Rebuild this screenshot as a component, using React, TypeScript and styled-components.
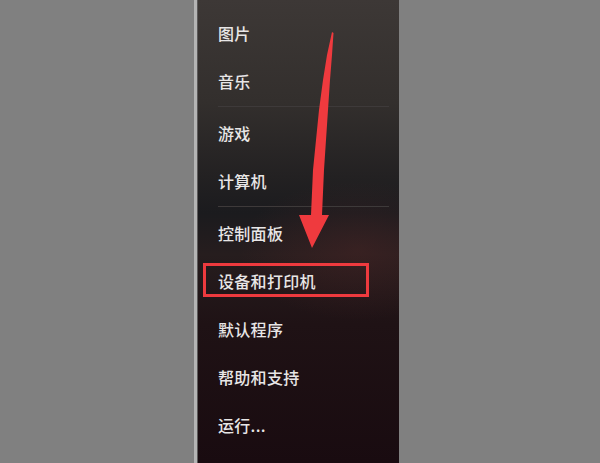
import React from 'react'
import styled, { createGlobalStyle } from 'styled-components'

const GlobalStyle = createGlobalStyle`
  html, body {
    margin: 0;
    padding: 0;
    background: #808080;
  }
  #root {
    height: 463px;
  }
`

const Page = styled.div`
  position: relative;
  display: flex;
  width: 600px;
  height: 463px;
  padding-left: 194px;
  box-sizing: border-box;
  overflow: hidden;
  background: #808080;
`

const Panel = styled.div`
  width: 205px;
  height: 100%;
  box-sizing: border-box;
  border-left: 3px solid #b4b4b4;
  box-shadow: inset 1px 0 0 #5c5a5a;
  background:
    radial-gradient(ellipse 120px 70px at 80% 54%, rgba(90, 40, 40, 0.35), transparent),
    linear-gradient(
      180deg,
      #3d3836 0%,
      #332f2d 22%,
      #232122 38%,
      #1b1b1e 46%,
      #261d1e 55%,
      #1f1215 70%,
      #190b10 100%
    );
`

const Menu = styled.ul`
  list-style: none;
  margin: 0;
  padding: 9px 10px 0 21px;
  display: flex;
  flex-direction: column;
`

const Item = styled.li<{ $marked?: boolean }>`
  position: relative;
  height: 48px;
  display: flex;
  align-items: center;
  font-family: "Noto Sans CJK SC", "Noto Sans", sans-serif;
  font-size: 16px;
  font-weight: 500;
  color: #e8e6e6;
  letter-spacing: 0.3px;

  ${(p) =>
    p.$marked &&
    `
    &::after {
      content: '';
      position: absolute;
      left: -15px;
      top: 6px;
      width: 166px;
      height: 34px;
      box-sizing: border-box;
      border: 3px solid #ee3a3e;
    }
  `}
`

const Separator = styled.li`
  height: 1px;
  margin: 1px 0 2px;
  background: #3e3a3a;
`

const ArrowLayer = styled.svg`
  position: absolute;
  left: 0;
  top: 0;
  pointer-events: none;
`

type Entry = { label: string; marked?: boolean } | 'sep'

const entries: Entry[] = [
  { label: '图片' },
  { label: '音乐' },
  'sep',
  { label: '游戏' },
  { label: '计算机' },
  'sep',
  { label: '控制面板' },
  { label: '设备和打印机', marked: true },
  { label: '默认程序' },
  { label: '帮助和支持' },
  { label: '运行...' },
]

function Arrow() {
  return (
    <ArrowLayer width="600" height="463" viewBox="0 0 600 463">
      <path
        d="M332 32 L327 55 L323 80 L319 110 L313 170 L311 215 L299 215 L312 248 L329 215 L322 215 L324 170 L328 110 L330 80 L332 55 L333.5 33 Z"
        fill="#ef3a3e"
      />
    </ArrowLayer>
  )
}

export default function App() {
  return (
    <>
      <GlobalStyle />
      <Page>
        <Panel>
          <Menu>
            {entries.map((e, i) =>
              e === 'sep' ? (
                <Separator key={i} />
              ) : (
                <Item key={i} $marked={e.marked}>
                  {e.label}
                </Item>
              )
            )}
          </Menu>
        </Panel>
        <Arrow />
      </Page>
    </>
  )
}
